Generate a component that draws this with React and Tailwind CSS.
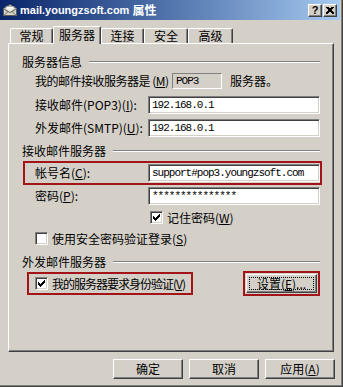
import React from "react";

const U = ({ children }) => (
  <span className="underline underline-offset-[1px] decoration-[1px]">{children}</span>
);

function Field({ value }) {
  return (
    <div className="h-[18px] w-[172px] shrink-0 bg-white border border-t-[#808080] border-l-[#808080] border-b-white border-r-white shadow-[inset_1px_1px_0_#404040,inset_-1px_-1px_0_#d4d0c8] flex items-center pl-[3px] font-['Liberation_Mono',monospace] text-[11px] tracking-[-1px] leading-[14px] text-black overflow-hidden whitespace-nowrap">
      {value}
    </div>
  );
}

function CheckMark() {
  const px = [
    [6, 0],
    [5, 1], [6, 1],
    [0, 2], [4, 2], [5, 2], [6, 2],
    [0, 3], [1, 3], [3, 3], [4, 3], [5, 3],
    [0, 4], [1, 4], [2, 4], [3, 4], [4, 4],
    [1, 5], [2, 5], [3, 5],
    [2, 6],
  ];
  return (
    <svg width="7" height="7" viewBox="0 0 7 7" shapeRendering="crispEdges">
      {px.map(([x, y], i) => (
        <rect key={i} x={x} y={y} width="1" height="1" fill="#000" />
      ))}
    </svg>
  );
}

function Check({ checked }) {
  return (
    <div className="w-[13px] h-[13px] shrink-0 bg-white border border-t-[#808080] border-l-[#808080] border-b-white border-r-white shadow-[inset_1px_1px_0_#404040,inset_-1px_-1px_0_#d4d0c8] flex items-center justify-center">
      {checked && <CheckMark />}
    </div>
  );
}

function Group({ title }) {
  return (
    <div className="flex items-center h-[14px] pl-[13px] pr-[13px]">
      <span className="text-[12px] leading-[14px] whitespace-nowrap">{title}</span>
      <div className="flex-1 ml-[7px] h-[2px] border-t border-t-[#808080] border-b border-b-white" />
    </div>
  );
}

function Label({ children }) {
  return (
    <span className="w-[113px] shrink-0 text-[12px] leading-[14px] whitespace-nowrap">{children}</span>
  );
}

function Tab({ children, selected, w }) {
  if (selected) {
    return (
      <div
        className={`${w} h-[18px] -mb-[1px] relative z-10 bg-[#d4d0c8] border-t border-l border-r border-t-white border-l-white border-r-[#404040] shadow-[inset_-1px_0_0_#808080] rounded-t-[2px] flex items-start justify-center pt-[1px] text-[12px] leading-[14px]`}
      >
        {children}
      </div>
    );
  }
  return (
    <div
      className={`${w} h-[15px] bg-[#d4d0c8] border-t border-l border-r border-t-white border-l-white border-r-[#404040] shadow-[inset_-1px_0_0_#808080] rounded-t-[2px] flex items-start justify-center text-[12px] leading-[14px]`}
    >
      {children}
    </div>
  );
}

function Btn({ children }) {
  return (
    <div className="w-[70px] h-[20px] border border-t-white border-l-white border-b-[#404040] border-r-[#404040] shadow-[inset_-1px_-1px_0_#808080,inset_1px_1px_0_#d4d0c8] flex items-center justify-center text-[12px] leading-[14px]">
      {children}
    </div>
  );
}

function MailIcon() {
  return (
    <svg width="16" height="16" viewBox="0 0 16 16">
      <path d="M1.5 6.5 L8 2.5 L14.5 6.5 L14.5 13.5 L1.5 13.5 Z" fill="#d8d4c4" stroke="#5a5a5a" />
      <rect x="4" y="4.5" width="8" height="5" fill="#ffffff" stroke="#8a8a8a" strokeWidth="0.6" />
      <path d="M1.5 6.5 L8 10.5 L14.5 6.5" fill="#ece9df" stroke="#5a5a5a" />
      <path d="M1.5 13.5 L6.5 9.5 M14.5 13.5 L9.5 9.5" stroke="#7a7a7a" />
    </svg>
  );
}

function TitleBtn({ children }) {
  return (
    <div className="w-[14px] h-[13px] bg-[#d4d0c8] border border-t-white border-l-white border-b-[#404040] border-r-[#404040] shadow-[inset_-1px_-1px_0_#808080] flex items-center justify-center font-['Liberation_Sans',sans-serif] font-bold text-[11px] leading-[11px] text-black">
      {children}
    </div>
  );
}

export default function App() {
  return (
    <div className="w-[343px] h-[387px] bg-[#d4d0c8] overflow-hidden flex flex-col border-r border-b border-r-[#404040] border-b-[#404040] shadow-[inset_-1px_-1px_0_#808080] font-['Noto_Sans_CJK_SC',sans-serif] text-black">
      {/* Title bar */}
      <div className="h-[20px] w-[340px] shrink-0 bg-linear-to-r from-[#0a246a] to-[#a6caf0] flex items-center pl-[2px] pr-[3px]">
        <MailIcon />
        <span className="ml-[2px] text-white font-bold text-[11px] leading-[14px] font-['Liberation_Sans',sans-serif]">
          mail.youngzsoft.com
        </span>
        <span className="ml-[3px] text-white font-bold text-[12px] leading-[14px] font-['Noto_Sans_CJK_SC',sans-serif]">
          属性
        </span>
        <div className="ml-auto flex gap-[1px]">
          <TitleBtn>?</TitleBtn>
          <TitleBtn>
            <svg width="8" height="7" viewBox="0 0 8 7" shapeRendering="crispEdges">
              <path d="M0.5 0 L7.5 7 M1.5 0 L8 6.5 M7.5 0 L0.5 7 M6.5 0 L0 6.5" stroke="#000" strokeWidth="1" />
            </svg>
          </TitleBtn>
        </div>
      </div>

      {/* Tabs */}
      <div className="mt-[6px] h-[17px] flex items-end pl-[10px]">
        <Tab w="w-[43px]">常规</Tab>
        <Tab w="w-[48px]" selected>服务器</Tab>
        <Tab w="w-[43px]">连接</Tab>
        <Tab w="w-[44px]">安全</Tab>
        <Tab w="w-[45px]">高级</Tab>
      </div>

      {/* Panel */}
      <div className="ml-[8px] w-[326px] h-[309px] border border-t-white border-l-white border-b-[#404040] border-r-[#404040] shadow-[inset_-1px_-1px_0_#808080] flex flex-col">
        <div className="mt-[11px]">
          <Group title="服务器信息" />
        </div>

        <div className="mt-[4px] h-[16px] flex items-center pl-[26px]">
          <span className="w-[137px] shrink-0 text-[12px] leading-[14px] tracking-[-0.5px] whitespace-nowrap">
            我的邮件接收服务器是 (<U>M</U>)
          </span>
          <div className="w-[50px] h-[16px] border border-t-[#808080] border-l-[#808080] border-b-white border-r-white flex items-center pl-[3px] font-['Liberation_Mono',monospace] text-[11px] tracking-[-1px] leading-[14px]">
            POP3
          </div>
          <span className="ml-[8px] text-[12px] leading-[14px]">服务器。</span>
        </div>

        <div className="mt-[7px] flex items-center pl-[26px]">
          <Label>
            接收邮件(POP3)(<U>I</U>):
          </Label>
          <Field value="192.168.0.1" />
        </div>

        <div className="mt-[5px] flex items-center pl-[26px]">
          <Label>
            外发邮件(SMTP)(<U>U</U>):
          </Label>
          <Field value="192.168.0.1" />
        </div>

        <div className="mt-[7px]">
          <Group title="接收邮件服务器" />
        </div>

        <div className="mt-[3px] ml-[14px] w-[299px] h-[24px] border-2 border-[#a31419] flex items-center pl-[10px]">
          <Label>
            帐号名(<U>C</U>):
          </Label>
          <Field value="support#pop3.youngzsoft.com" />
        </div>

        <div className="mt-[2px] flex items-center pl-[26px]">
          <Label>
            密码(<U>P</U>):
          </Label>
          <Field value="***************" />
        </div>

        <div className="mt-[6px] h-[13px] flex items-center pl-[141px]">
          <Check checked />
          <span className="ml-[4px] text-[12px] leading-[14px]">
            记住密码(<U>W</U>)
          </span>
        </div>

        <div className="mt-[8px] h-[13px] flex items-center pl-[26px]">
          <Check />
          <span className="ml-[4px] text-[12px] leading-[14px]">
            使用安全密码验证登录(<U>S</U>)
          </span>
        </div>

        <div className="mt-[10px]">
          <Group title="外发邮件服务器" />
        </div>

        <div className="mt-[2px] h-[25px] flex items-center pl-[18px]">
          <div className="w-[166px] h-[23px] border-2 border-[#a31419] flex items-center pl-[6px]">
            <Check checked />
            <span className="ml-[4px] text-[12px] leading-[14px] tracking-[-1px] whitespace-nowrap">
              我的服务器要求身份验证(<U>V</U>)
            </span>
          </div>
          <div className="ml-[50px] w-[77px] h-[25px] border-2 border-[#a31419] p-[1px]">
            <div className="w-full h-full border border-t-white border-l-white border-b-[#404040] border-r-[#404040] shadow-[inset_-1px_-1px_0_#808080] p-[2px]">
              <div className="w-full h-full border border-dotted border-black flex items-center justify-center text-[12px] leading-[12px] whitespace-nowrap">
                设置(<U>E</U>)...
              </div>
            </div>
          </div>
        </div>
      </div>

      {/* Bottom buttons */}
      <div className="mt-[7px] flex gap-[6px] pl-[113px]">
        <Btn>确定</Btn>
        <Btn>取消</Btn>
        <Btn>
          应用(<U>A</U>)
        </Btn>
      </div>
    </div>
  );
}
